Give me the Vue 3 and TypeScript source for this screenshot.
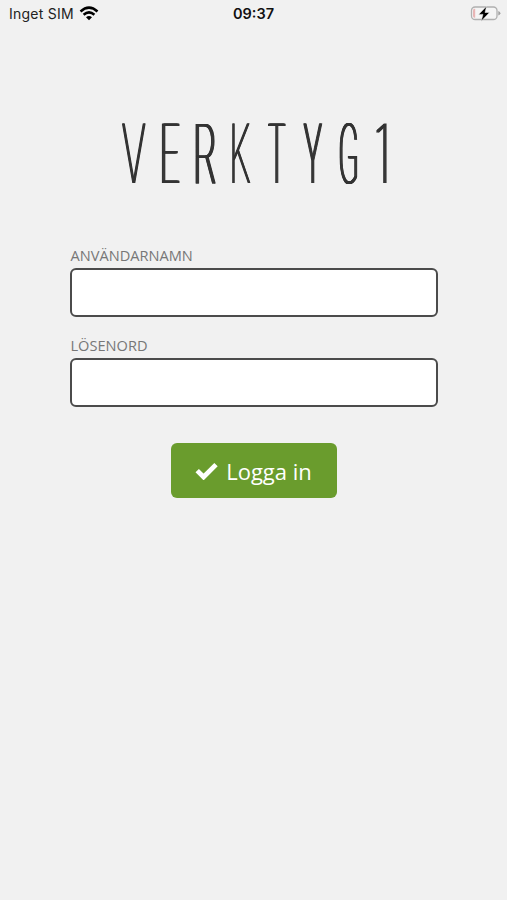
<script setup lang="ts">
import { ref } from 'vue'

interface Letter {
  char: string
  scale: number
  slanted?: boolean
}

const wordmark: Letter[] = [
  { char: 'V', scale: 0.47, slanted: true },
  { char: 'E', scale: 0.42 },
  { char: 'R', scale: 0.43 },
  { char: 'K', scale: 0.4, slanted: true },
  { char: 'T', scale: 0.34 },
  { char: 'Y', scale: 0.36 },
  { char: 'G', scale: 0.36 },
  { char: '1', scale: 0.4 },
]

const username = ref('')
const password = ref('')
</script>

<template>
  <div class="screen">
    <header class="status">
      <div class="carrier">
        <span>Inget SIM</span>
        <svg class="wifi" width="20" height="15" viewBox="0 0 20 15">
          <g fill="none" stroke="#000" stroke-width="2.5">
            <path d="M1.5 5.5Q10-2.2 18.5 5.5" />
            <path d="M4.6 8.8Q10 4 15.4 8.8" />
          </g>
          <path d="M7 11.2Q10 8.6 13 11.2L10 14.2Z" />
        </svg>
      </div>
      <span class="time">09:37</span>
      <svg class="battery" width="32" height="18" viewBox="0 0 32 18">
        <rect x="1.5" y="2" width="25.5" height="12.5" rx="3.6" fill="#f5f5f5" stroke="#b0b0b0" stroke-width="1.3" />
        <path d="M5.2 3.8v9H4.5Q3 12.8 3 11v-5.4Q3 3.8 4.5 3.8Z" fill="#e9b5b5" />
        <path d="M28.3 6Q30.4 6.7 30.4 8.3T28.3 10.5Z" fill="#a0a0a0" />
        <path d="M16.6 1.2L8.6 9.4h4.4l-1.9 6.8 8.4-8.7h-4.5Z" stroke="#f5f5f5" stroke-width=".5" />
      </svg>
    </header>

    <main class="login">
      <h1 class="logo">
        <span v-for="(l, i) in wordmark" :key="i" class="cell"><span class="letter" :class="{ slanted: l.slanted }" :style="{ transform: `scaleX(${l.scale})` }">{{ l.char }}</span></span>
      </h1>
      <form class="form" @submit.prevent>
        <label class="field">
          <span class="caption">ANVÄNDARNAMN</span>
          <input v-model="username" class="input" type="text" />
        </label>
        <label class="field">
          <span class="caption">LÖSENORD</span>
          <input v-model="password" class="input" type="password" />
        </label>
        <button class="submit" type="submit">
          <svg width="23" height="18" viewBox="0 0 23 18">
            <path d="M2.2 8.6L8.6 15 21 2.6" fill="none" stroke="#fff" stroke-width="4.8" />
          </svg>
          <span>Logga in</span>
        </button>
      </form>
    </main>
  </div>
</template>

<style>
body {
  margin: 0;
  background: #f1f1f1;
}
</style>

<style scoped>
.screen {
  min-height: 900px;
  background: #f1f1f1;
  font-family: 'Open Sans', sans-serif;
}
.status {
  display: grid;
  grid-template-columns: 1fr auto 1fr;
  align-items: center;
  height: 27px;
  padding: 0 5px 0 9px;
  box-sizing: border-box;
  font-family: Inter, sans-serif;
  font-size: 14px;
  color: #222;
}
.carrier {
  display: flex;
  align-items: center;
  gap: 5px;
  letter-spacing: 0.25px;
}
.wifi {
  display: block;
}
.time {
  margin-right: 4px;
  font-size: 14.5px;
  font-weight: 600;
  color: #111;
}
.battery {
  justify-self: end;
}
.login {
  display: flex;
  flex-direction: column;
  align-items: center;
}
.logo {
  display: grid;
  grid-template-columns: repeat(8, 35.8px);
  width: 287px;
  height: 84px;
  margin: 86px 0 0 11px;
  font-family: Roboto, sans-serif;
  font-size: 83px;
  font-weight: 100;
  line-height: 84px;
  color: #333;
}
.cell {
  display: flex;
  justify-content: center;
}
.letter {
  flex: none;
  text-shadow: 1px 0 #333, -1px 0 #333, 2px 0 #333, -2px 0 #333, 3px 0 #333, -3px 0 #333;
}
.letter.slanted {
  text-shadow: 1px 0 #333, -1px 0 #333, 2px 0 #333, -2px 0 #333;
}
.form {
  display: flex;
  flex-direction: column;
  align-items: center;
  width: 368px;
  margin-top: 49px;
}
.field {
  display: flex;
  flex-direction: column;
  width: 100%;
  height: 90px;
}
.caption {
  height: 22px;
  padding-left: 1px;
  line-height: 18px;
  font-size: 14.6px;
  color: #777;
}
.input {
  width: 100%;
  height: 49px;
  box-sizing: border-box;
  padding: 0 12px;
  border: 2px solid #4b4b4b;
  border-radius: 6px;
  background: #fff;
  font: inherit;
  outline: none;
}
.submit {
  display: flex;
  align-items: center;
  justify-content: center;
  gap: 8px;
  width: 166px;
  height: 55px;
  margin-top: 17px;
  padding: 0;
  border: 0;
  border-radius: 6px;
  background: #6a9c2d;
  color: #fff;
  font-family: inherit;
  font-size: 22px;
}
</style>
